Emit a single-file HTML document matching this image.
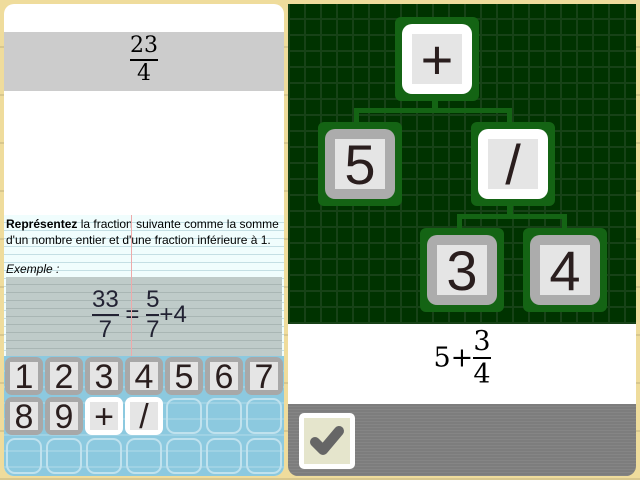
<!DOCTYPE html>
<html><head><meta charset="utf-8"><style>
*{margin:0;padding:0;box-sizing:border-box}
body{width:640px;height:480px;overflow:hidden;position:relative;font-family:"Liberation Sans",sans-serif;
background:#efdc9c repeating-linear-gradient(180deg,transparent 0 46px,#d8c78e 46px 48px);}
.abs{position:absolute}
#left{left:4px;top:4px;width:280px;height:472px;border-radius:10px;overflow:hidden;background:#fff}
.frac{display:inline-flex;flex-direction:column;align-items:center;vertical-align:middle;font-family:"DejaVu Serif","Liberation Serif",serif}
.frac span{display:block;line-height:1}
.frac .bar{height:1.5px;background:#000;align-self:stretch;margin:2px 0}
.key{position:absolute;width:38px;height:38px;border-radius:7px;background:#a8a8a8}
.key .in{position:absolute;left:5px;top:5px;width:28px;height:28px;background:#e5e5e5;font-size:34px;color:#2a1e1e;text-align:center;line-height:30px}
.key.w{background:#fff}
.empty{position:absolute;width:36px;height:36px;border:2px solid #c0e2ee;border-radius:9px}
.node{position:absolute;width:84px;height:84px;background:#146414;border-radius:6px}
.node .o{position:absolute;left:7px;top:7px;width:70px;height:70px;border-radius:10px;background:#acacac}
.node .o.w{background:#fff}
.node .i{position:absolute;left:10px;top:10px;width:50px;height:50px;background:#e5e5e5;font-size:56px;color:#2a1e1e;text-align:center;line-height:52px}
.ln{position:absolute;background:#146414}
</style></head><body>
<div id="left" class="abs">
 <div class="abs" style="left:0;top:28px;width:280px;height:59px;background:#ccc;text-align:center;padding-top:3px">
  <div class="frac" style="font-size:22px"><span>23</span><div class="bar"></div><span>4</span></div>
 </div>
 <div class="abs" style="left:0;top:211px;width:280px;height:141px;background:#f0fdfd repeating-linear-gradient(180deg,transparent 0 7px,#c4dfe4 7px 8px)"></div>
 <div class="abs" style="left:2px;top:212px;width:276px;font-size:12px;line-height:16px;color:#000">
  <b>Représentez</b> la fraction suivante comme la somme d'un nombre entier et d'une fraction inférieure à 1.
 </div>
 <div class="abs" style="left:2px;top:258px;font-size:12px;font-style:italic">Exemple :</div>
 <div class="abs" style="left:2px;top:273px;width:276px;height:80px;background:#bfcbc9 repeating-linear-gradient(180deg,transparent 0 7px,#a9b6b4 7px 8px);"></div>
 <div class="abs" style="left:88px;top:284px;font-size:24px;color:#223">
  <div class="frac" style="font-family:'Liberation Sans',sans-serif"><span>33</span><div class="bar" style="background:#223"></div><span>7</span></div>
  <span style="vertical-align:middle">=</span>
  <div class="frac" style="font-family:'Liberation Sans',sans-serif"><span>5</span><div class="bar" style="background:#223"></div><span>7</span></div><span style="vertical-align:middle">+4</span>
 </div>
 <div class="abs" style="left:127px;top:211px;width:1px;height:145px;background:#eaa"></div>
 <div class="abs" style="left:0;top:352px;width:280px;height:120px;background:#8cc9df repeating-linear-gradient(180deg,transparent 0 14px,#9fd2e4 14px 16px)"></div>
</div>
<div class="abs" style="left:0;top:0;width:290px;height:480px">
 <div class="key" style="left:5px;top:357px"><div class="in">1</div></div>
 <div class="key" style="left:45px;top:357px"><div class="in">2</div></div>
 <div class="key" style="left:85px;top:357px"><div class="in">3</div></div>
 <div class="key" style="left:125px;top:357px"><div class="in">4</div></div>
 <div class="key" style="left:165px;top:357px"><div class="in">5</div></div>
 <div class="key" style="left:205px;top:357px"><div class="in">6</div></div>
 <div class="key" style="left:245px;top:357px"><div class="in">7</div></div>
 <div class="key" style="left:5px;top:397px"><div class="in">8</div></div>
 <div class="key" style="left:45px;top:397px"><div class="in">9</div></div>
 <div class="key w" style="left:85px;top:397px"><div class="in">+</div></div>
 <div class="key w" style="left:125px;top:397px"><div class="in">/</div></div>
 <div class="empty" style="left:166px;top:398px"></div>
 <div class="empty" style="left:206px;top:398px"></div>
 <div class="empty" style="left:246px;top:398px"></div>
 <div class="empty" style="left:6px;top:438px"></div>
 <div class="empty" style="left:46px;top:438px"></div>
 <div class="empty" style="left:86px;top:438px"></div>
 <div class="empty" style="left:126px;top:438px"></div>
 <div class="empty" style="left:166px;top:438px"></div>
 <div class="empty" style="left:206px;top:438px"></div>
 <div class="empty" style="left:246px;top:438px"></div>
</div>
<div class="abs" style="left:288px;top:4px;width:348px;height:472px;border-radius:0 0 10px 10px;overflow:hidden">
 <div class="abs" style="left:0;top:0;width:348px;height:320px;background-color:#003300;background-image:linear-gradient(90deg,#174217 2px,transparent 2px),linear-gradient(180deg,#174217 2px,transparent 2px);background-size:16px 16px;background-position:16px 14px"></div>
 <div class="abs" style="left:0;top:320px;width:348px;height:80px;background:#fff;text-align:center;padding-top:4px;font-family:'DejaVu Serif',serif;font-size:27px">
  <span style="vertical-align:middle">5+</span><div class="frac" style="font-size:27px"><span>3</span><div class="bar"></div><span>4</span></div>
 </div>
 <div class="abs" style="left:0;top:400px;width:348px;height:72px;background:#7d7d7d repeating-linear-gradient(180deg,transparent 0 2px,#858585 2px 3px)"></div>
 <div class="abs" style="left:11px;top:409px;width:56px;height:56px;background:#fff;border-radius:5px">
  <div class="abs" style="left:5px;top:5px;width:46px;height:46px;background:#e5e5cc">
   <svg width="46" height="46" viewBox="0 0 46 46"><path d="M11 24 L19 32 L35 13" fill="none" stroke="#666" stroke-width="10" stroke-linecap="round" stroke-linejoin="round"/></svg>
  </div>
 </div>
</div>
<div class="ln" style="left:432px;top:100px;width:6px;height:12px"></div>
<div class="ln" style="left:354px;top:108px;width:158px;height:5px"></div>
<div class="ln" style="left:354px;top:108px;width:5px;height:16px"></div>
<div class="ln" style="left:507px;top:108px;width:5px;height:16px"></div>
<div class="ln" style="left:507px;top:205px;width:6px;height:12px"></div>
<div class="ln" style="left:457px;top:214px;width:110px;height:5px"></div>
<div class="ln" style="left:457px;top:214px;width:5px;height:16px"></div>
<div class="ln" style="left:562px;top:214px;width:5px;height:16px"></div>
<div class="node" style="left:395px;top:17px"><div class="o w"><div class="i">+</div></div></div>
<div class="node" style="left:318px;top:122px"><div class="o"><div class="i">5</div></div></div>
<div class="node" style="left:471px;top:122px"><div class="o w"><div class="i">/</div></div></div>
<div class="node" style="left:420px;top:228px"><div class="o"><div class="i">3</div></div></div>
<div class="node" style="left:523px;top:228px"><div class="o"><div class="i">4</div></div></div>
</body></html>
